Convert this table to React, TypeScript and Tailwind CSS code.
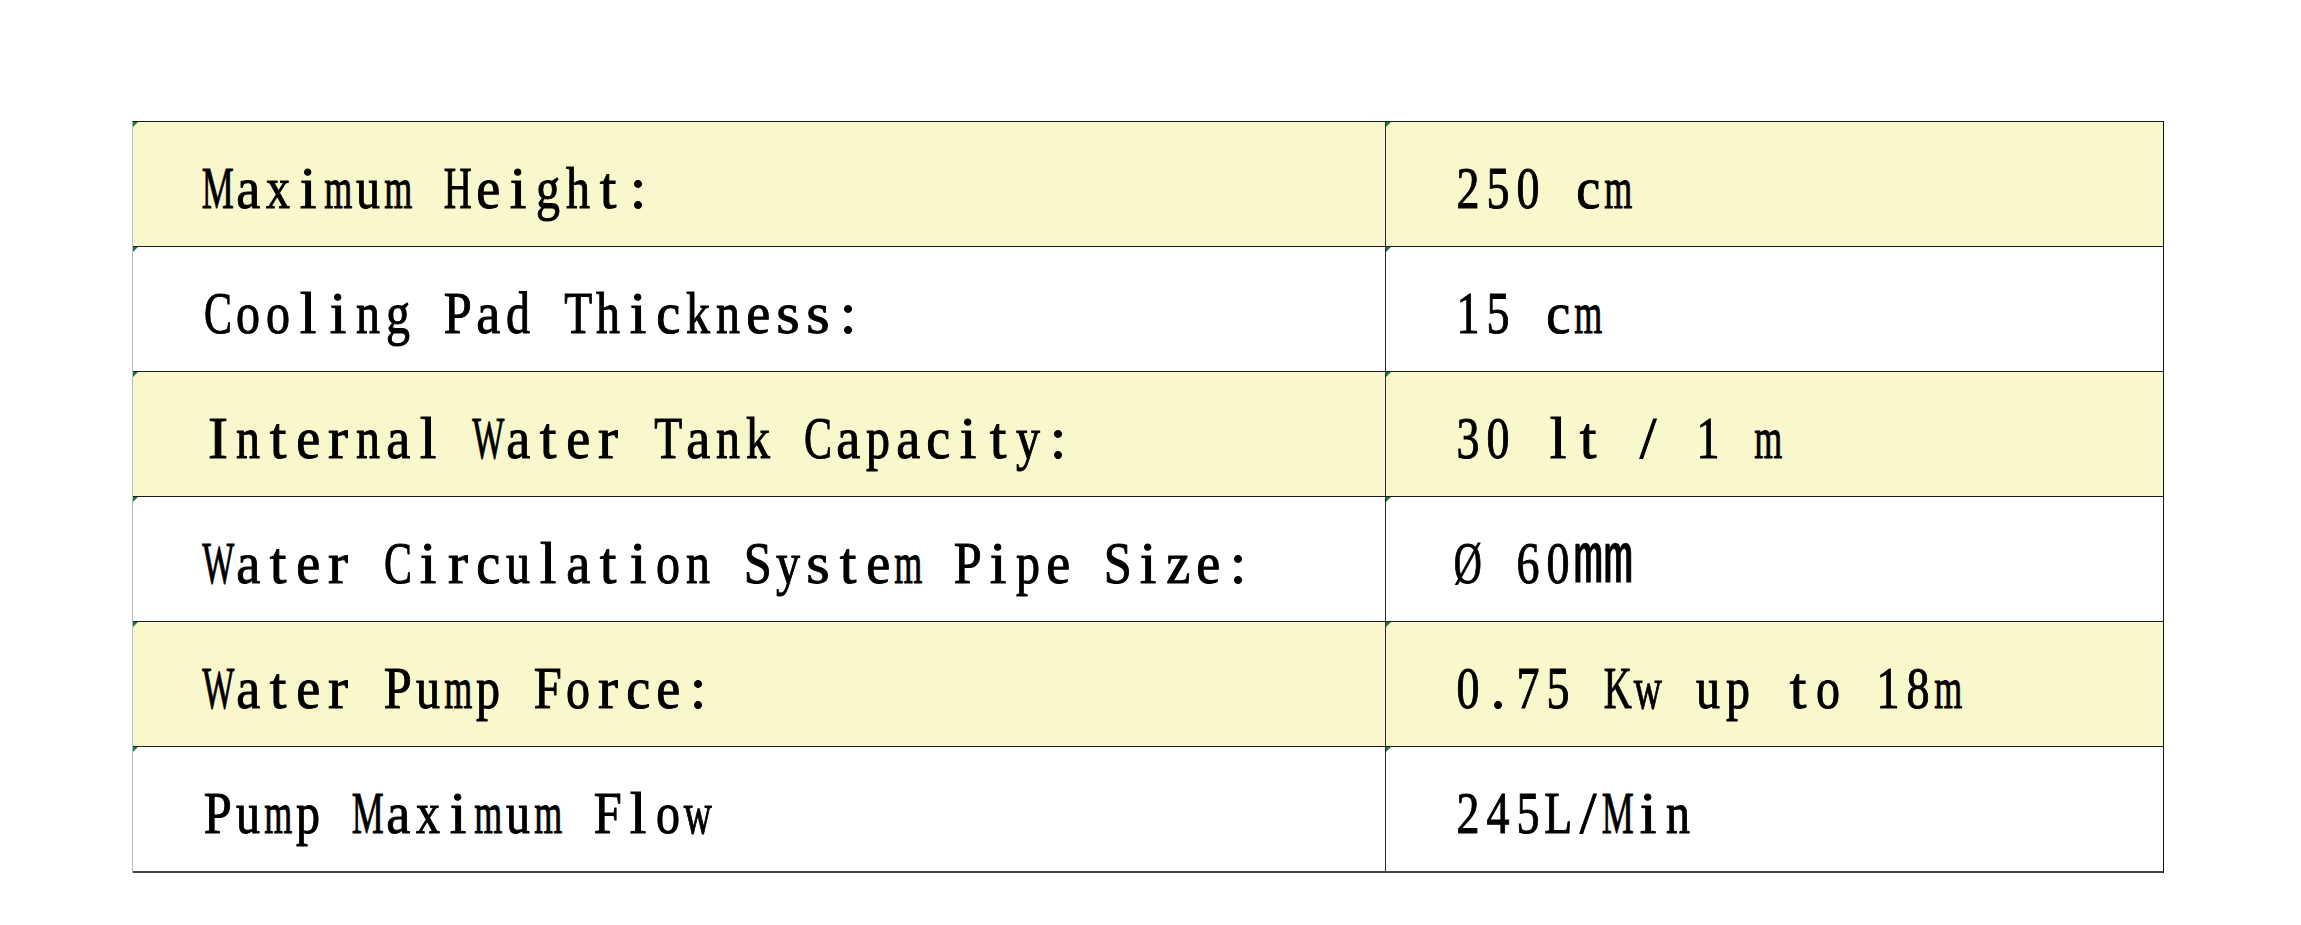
import React from "react";

interface SpecRow {
  label: string;
  value: string;
}

const rows: SpecRow[] = [
  { label: "Maximum Height:", value: "250 cm" },
  { label: "Cooling Pad Thickness:", value: "15 cm" },
  { label: "Internal Water Tank Capacity:", value: "30 lt / 1 m" },
  { label: "Water Circulation System Pipe Size:", value: "Ø 60㎜" },
  { label: "Water Pump Force:", value: "0.75 Kw up to 18m" },
  { label: "Pump Maximum Flow", value: "245L/Min" },
];

// Times advance widths (1/1000 em), used to squeeze each glyph into its slot
const widths: Record<string, number> = {
  A: 722, B: 667, C: 667, D: 722, E: 611, F: 556, G: 722, H: 722, I: 333,
  J: 389, K: 722, L: 611, M: 889, N: 722, O: 722, P: 556, Q: 722, R: 667,
  S: 556, T: 611, U: 722, V: 722, W: 944, X: 722, Y: 722, Z: 611,
  a: 444, b: 500, c: 444, d: 500, e: 444, f: 333, g: 500, h: 500, i: 278,
  j: 278, k: 500, l: 278, m: 778, n: 500, o: 500, p: 500, q: 500, r: 333,
  s: 389, t: 278, u: 500, v: 500, w: 722, x: 500, y: 500, z: 444,
  "0": 500, "1": 500, "2": 500, "3": 500, "4": 500, "5": 500, "6": 500,
  "7": 500, "8": 500, "9": 500, "Ø": 722,
};

const squeeze = (ch: string) => {
  const w = widths[ch];
  if (!w) return 1;
  let target = 24;
  if (/[0-9]/.test(ch)) target = 23;
  else if (ch === "m" || ch === "w") target = 28;
  else if (ch === "M" || ch === "W") target = 32;
  else if (/[A-ZØ]/.test(ch)) target = 28;
  return Math.min(1, target / ((w * 60) / 1000));
};

// little green corner mark, like the one a spreadsheet puts on a cell
const Corner = () => (
  <div className="absolute left-0 top-0 h-0 w-0 border-t-[5px] border-r-[5px] border-t-[#1e7a3c] border-r-transparent" />
);

// half-width serif text: every character gets its own 30px slot
const CellText = ({ text }: { text: string }) => (
  <span className="inline-flex items-baseline font-['Liberation_Serif','Noto_Sans_CJK_SC',serif] text-[60px] leading-none text-black">
    {[...text].map((ch, i) => {
      const wide = ch.charCodeAt(0) > 0x2e80;
      return (
        <span
          key={i}
          className={`inline-flex justify-center ${wide ? "w-[60px]" : "w-[30px]"}`}
        >
          {wide ? (
            <span className="inline-block origin-bottom scale-y-[1.15] text-[60px] [-webkit-text-stroke:0.6px_#000]">
              {ch}
            </span>
          ) : (
            <span
              className="inline-block whitespace-pre [-webkit-text-stroke:1px_#000]"
              style={{ transform: `scaleX(${squeeze(ch)})` }}
            >
              {ch}
            </span>
          )}
        </span>
      );
    })}
  </span>
);

const App = () => {
  return (
    <div className="min-h-[925px] w-[2301px] bg-white pl-[132px] pt-[121px]">
      <div className="w-[2032px] border-t border-r border-l border-t-[#1c1c1c] border-r-[#111] border-l-[#b9bcc4]">
        {rows.map((row, i) => {
          const last = i === rows.length - 1;
          return (
            <div
              key={row.label}
              className={`grid grid-cols-[1253px_1fr] ${
                i % 2 === 0 ? "bg-[#f8f8cc]" : "bg-white"
              } ${last ? "border-b-2 border-b-[#454545]" : "border-b border-b-[#1c1c1c]"}`}
            >
              <div className="relative flex h-[124px] items-center border-r border-r-[#2a2a2a] pl-[70px] pt-2">
                <Corner />
                <CellText text={row.label} />
              </div>
              <div className="relative flex h-[124px] items-center pl-[67px] pt-2">
                <Corner />
                <CellText text={row.value} />
              </div>
            </div>
          );
        })}
      </div>
    </div>
  );
};

export default App;
